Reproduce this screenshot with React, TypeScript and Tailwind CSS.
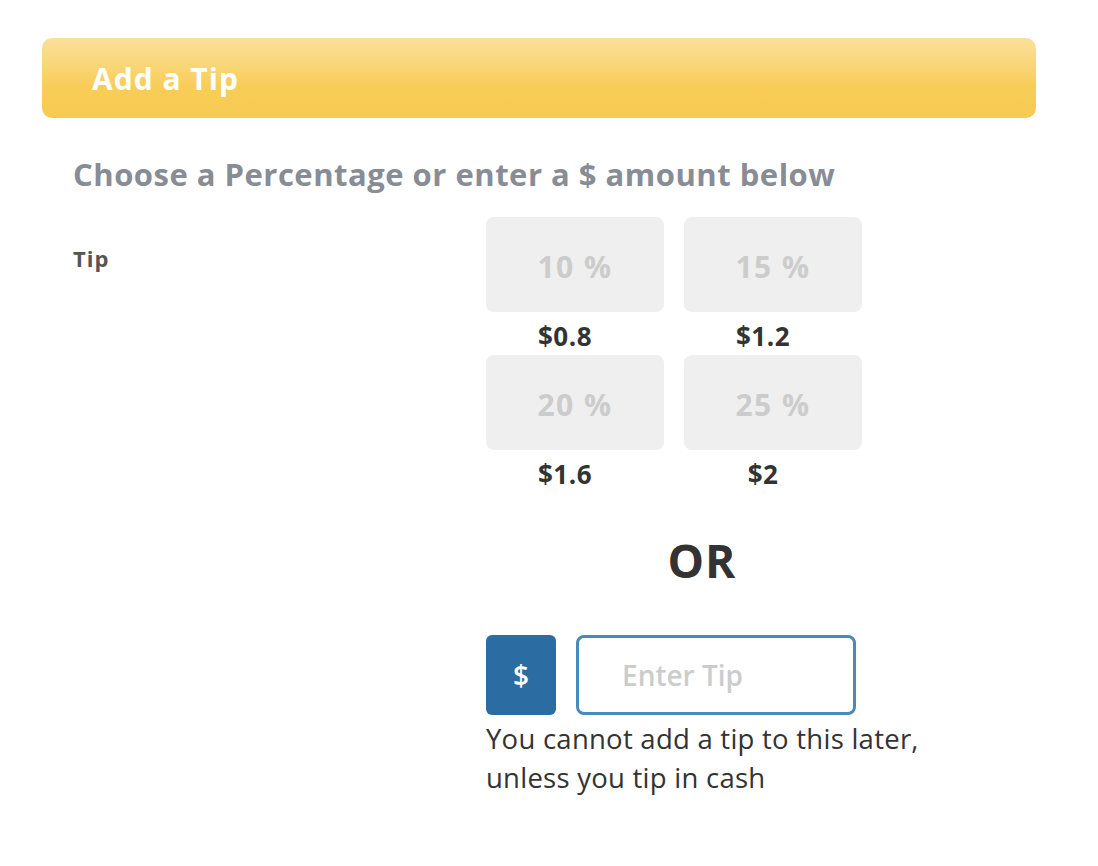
import React from 'react';

const options = [
  { pct: '10 %', amount: '$0.8' },
  { pct: '15 %', amount: '$1.2' },
  { pct: '20 %', amount: '$1.6' },
  { pct: '25 %', amount: '$2' },
];

export default function App() {
  return (
    <div className="min-h-[866px] bg-white pt-[38px] px-[42px] font-['Open_Sans',sans-serif]">
      {/* Header */}
      <div className="w-[994px] h-[80px] rounded-[10px] bg-gradient-to-b from-[#fbe09b] via-[#f8cd57] via-60% to-[#f8ca52] flex items-center pl-[50px]">
        <h2 className="text-[30px] tracking-[1px] font-bold text-white">Add a Tip</h2>
      </div>

      <div className="pl-[31px]">
        <p className="mt-[36px] text-[31px] leading-[40px] tracking-[0.5px] font-bold text-[#878c95]">
          Choose a Percentage or enter a $ amount below
        </p>

        <div className="flex mt-[23px]">
          <div className="w-[413px] pt-[25px] text-[22px] tracking-[1px] font-bold text-[#555]">Tip</div>

          <div className="flex flex-col">
            <div className="grid grid-cols-[178px_178px] gap-x-[20px]">
              {options.map((o) => (
                <div key={o.pct} className="flex flex-col">
                  <button className="w-[178px] h-[95px] pt-[4px] rounded-[8px] bg-[#efefef] text-[30px] tracking-[1.5px] font-bold text-[#cccccc]">
                    {o.pct}
                  </button>
                  <div className="h-[43px] pr-[20px] text-center text-[26px] tracking-[0.5px] leading-[48px] font-bold text-[#333]">
                    {o.amount}
                  </div>
                </div>
              ))}
            </div>

            <div className="w-[432px] text-center mt-[36px] text-[46px] tracking-[1px] leading-[62px] font-bold text-[#333]">OR</div>

            <div className="flex mt-[44px] gap-[20px]">
              <div className="w-[70px] h-[80px] rounded-[6px] bg-[#2b6ca3] flex items-center justify-center text-[28px] font-semibold text-white">
                $
              </div>
              <input
                placeholder="Enter Tip"
                className="w-[280px] h-[80px] rounded-[8px] border-[3px] border-[#4a8ab6] pl-[43px] text-[28px] font-semibold outline-none placeholder:text-[#cccccc]"
              />
            </div>
            <p className="mt-[4px] text-[27.5px] tracking-[0.25px] leading-[39px] text-[#333] w-[470px]">
              You cannot add a tip to this later, unless you tip in cash
            </p>
          </div>
        </div>
      </div>
    </div>
  );
}
